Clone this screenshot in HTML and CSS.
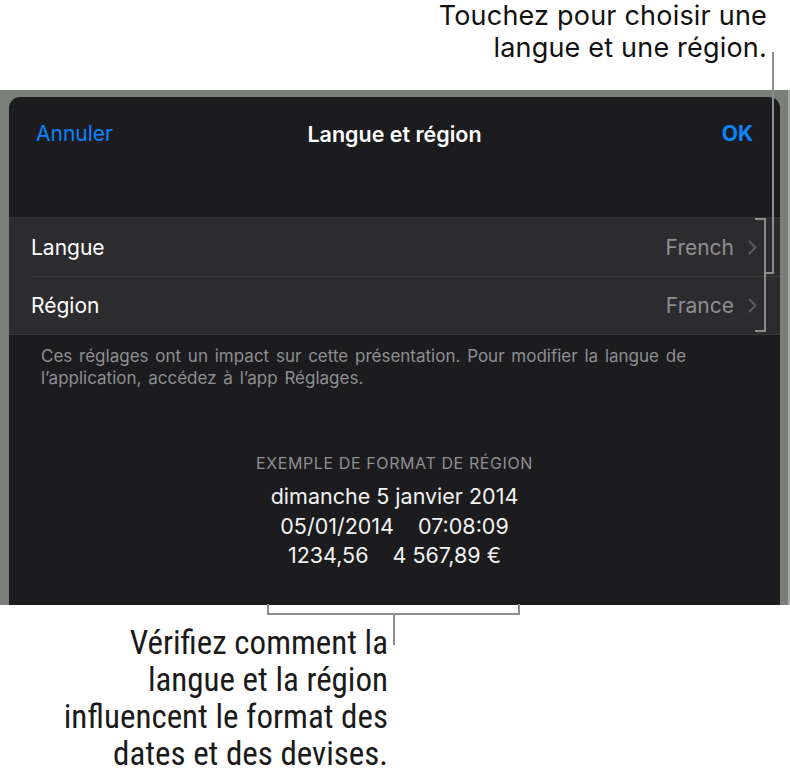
FILE: index.html
```html
<!DOCTYPE html>
<html lang="fr">
<head>
<meta charset="utf-8">
<title>Langue et région</title>
<link rel="stylesheet" href="styles.css">
</head>
<body>
  <div class="page">
    <p class="note note-top">Touchez pour choisir une<br>langue et une région.</p>

    <div class="stage">
      <section class="sheet">
        <header class="navbar">
          <span class="nav-btn">Annuler</span>
          <span class="nav-title">Langue et région</span>
          <span class="nav-btn nav-done">OK</span>
        </header>

        <ul class="group">
          <li class="row">
            <span class="row-label">Langue</span>
            <span class="row-value">French</span>
            <svg class="chevron" width="9" height="15" viewBox="0 0 9 15"><polyline points="1.5,1.5 7.5,7.5 1.5,13.5" fill="none" stroke="#5b5b60" stroke-width="2" stroke-linecap="round" stroke-linejoin="round"/></svg>
          </li>
          <li class="row">
            <span class="row-label">Région</span>
            <span class="row-value">France</span>
            <svg class="chevron" width="9" height="15" viewBox="0 0 9 15"><polyline points="1.5,1.5 7.5,7.5 1.5,13.5" fill="none" stroke="#5b5b60" stroke-width="2" stroke-linecap="round" stroke-linejoin="round"/></svg>
          </li>
        </ul>

        <p class="group-footer">Ces réglages ont un impact sur cette présentation. Pour modifier la langue de<br>l’application, accédez à l’app Réglages.</p>

        <div class="sample">
          <h2 class="sample-title">EXEMPLE DE FORMAT DE RÉGION</h2>
          <p class="sample-line">dimanche 5 janvier 2014</p>
          <p class="sample-line">05/01/2014<span class="sp"></span>07:08:09</p>
          <p class="sample-line">1234,56<span class="sp"></span>4 567,89 €</p>
        </div>
      </section>
    </div>

    <p class="note note-bottom">Vérifiez comment la<br>langue et la région<br>influencent le format des<br>dates et des devises.</p>

    <!-- callout leaders -->
    <div class="lead lead-rows-bracket"></div>
    <div class="lead lead-rows-tie"></div>
    <div class="lead lead-rows-up"></div>
    <div class="lead lead-sample-bracket"></div>
    <div class="lead lead-sample-down"></div>
  </div>
</body>
</html>
```

FILE: styles.css
```css
* { box-sizing: border-box; }

html, body {
  margin: 0;
  padding: 0;
  background: #ffffff;
}

.page {
  position: relative;
  width: 790px;
  height: 774px;
  overflow: hidden;
  font-family: "Inter", "Liberation Sans", sans-serif;
}

p, h2, ul { margin: 0; padding: 0; }
ul { list-style: none; }

/* annotation text */
.note {
  color: #111111;
  text-align: right;
}

.note-top {
  height: 90px;
  padding-right: 23px;
  font-size: 27px;
  line-height: 32px;
  letter-spacing: 0.2px;
}

.note-bottom {
  width: 388px;
  padding-top: 19px;
  font-family: "Liberation Sans Narrow", "Roboto Condensed", "Liberation Sans", sans-serif;
  font-size: 33px;
  line-height: 37px;
  color: #1a1a1a;
}

/* dimmed backdrop around the sheet */
.stage {
  height: 515px;
  background: #7a7f79;
  border-right: 2px solid #a9aca8;
  padding: 7px 8px 0 9px;
  display: flex;
}

.sheet {
  flex: 1;
  background: #1c1c1e;
  border-radius: 11px 11px 0 0;
  color: #ffffff;
  display: flex;
  flex-direction: column;
}

.navbar {
  height: 120px;
  padding: 23px 27px 0 27px;
  display: grid;
  grid-template-columns: 1fr auto 1fr;
  align-items: start;
  font-size: 21px;
  line-height: 28px;
}

.nav-btn { color: #0a84ff; }
.nav-title { font-weight: 600; font-size: 21.5px; }
.nav-done { font-weight: 700; text-align: right; }

.group {
  background: #2c2c2e;
  border-top: 1px solid #333336;
  border-bottom: 1px solid #3a3a3c;
}

.row {
  height: 58px;
  margin-left: 22px;
  padding-right: 23px;
  display: flex;
  align-items: center;
  font-size: 21px;
}

.row + .row { border-top: 1px solid #3a3a3c; }

.row-label { flex: 1; }

.row-value {
  color: #8e8e93;
  margin-right: 14px;
}

.chevron { display: block; }

.group-footer {
  padding: 10px 32px 0 32px;
  font-size: 17px;
  line-height: 22px;
  word-spacing: 2px;
  color: #8e8e93;
}

.sample {
  margin-top: 63px;
  text-align: center;
}

.sample-title {
  font-size: 16px;
  font-weight: 400;
  letter-spacing: 0.6px;
  line-height: 22px;
  color: #8e8e93;
  margin-bottom: 8px;
}

.sample-line {
  font-size: 21.5px;
  line-height: 29.5px;
  color: #f2f2f2;
}

.sp {
  display: inline-block;
  width: 24px;
}

/* callout leader lines drawn over the screenshot */
.lead {
  position: absolute;
  border-color: #8d8d8d;
  border-style: solid;
  border-width: 0;
}

.lead-rows-bracket {
  left: 755px;
  top: 218px;
  width: 11px;
  height: 114px;
  border-width: 2px 2px 2px 0;
}

.lead-rows-tie {
  left: 764px;
  top: 272px;
  width: 10px;
  height: 2px;
  border-top-width: 2px;
}

.lead-rows-up {
  left: 772px;
  top: 52px;
  width: 2px;
  height: 222px;
  border-left-width: 2px;
}

.lead-sample-bracket {
  left: 267px;
  top: 604px;
  width: 253px;
  height: 11px;
  border-width: 0 2px 2px 2px;
}

.lead-sample-down {
  left: 393px;
  top: 613px;
  width: 2px;
  height: 32px;
  border-left-width: 2px;
}
```
